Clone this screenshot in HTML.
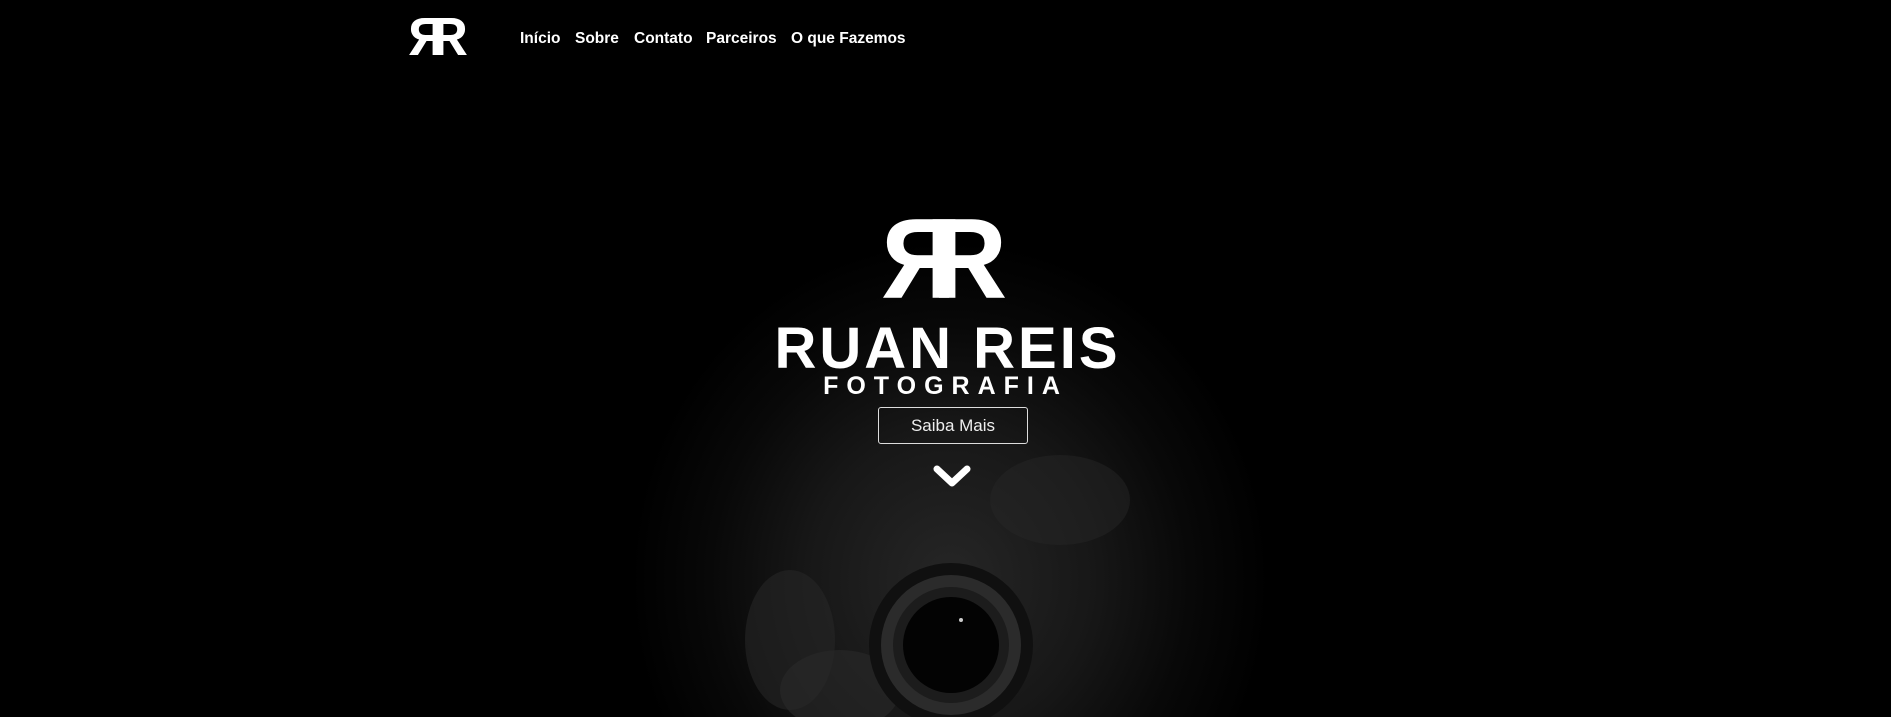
<!DOCTYPE html>
<html><head><meta charset="utf-8"><style>
html,body{margin:0;padding:0;background:#000;width:1891px;height:717px;overflow:hidden;font-family:"Liberation Sans",sans-serif;color:#fff}
.bg{position:absolute;left:0;top:0;width:1891px;height:717px;background:radial-gradient(ellipse 320px 340px at 950px 580px,#262626 0%,#171717 45%,#080808 75%,#000 100%)}
.nav{position:absolute;top:30px;left:520px;font-weight:bold;font-size:15.5px}
.nav span{position:absolute;white-space:nowrap}
.title{position:absolute;left:0;width:1891px;text-align:center;font-weight:bold}
.btn{position:absolute;left:878px;top:407px;width:148px;height:35px;border:1px solid #ddd;border-radius:3px;text-align:center;line-height:35px;font-size:17px;color:#eee}
</style></head><body>
<div class="bg"></div>
<svg style="position:absolute;left:0;top:0" width="1891" height="717">
 <ellipse cx="790" cy="640" rx="45" ry="70" fill="#262626" opacity="0.6"/>
 <ellipse cx="840" cy="690" rx="60" ry="40" fill="#2a2a2a" opacity="0.6"/>
 <ellipse cx="1060" cy="500" rx="70" ry="45" fill="#262626" opacity="0.5"/>
 <circle cx="951" cy="645" r="82" fill="#101010"/>
 <circle cx="951" cy="645" r="70" fill="#2b2b2b"/>
 <circle cx="951" cy="645" r="58" fill="#1c1c1c"/>
 <circle cx="951" cy="645" r="48" fill="#030303"/>
 <circle cx="961" cy="620" r="2" fill="#ccc"/>
 <g transform="translate(413,15)">
  <text x="0" y="40" font-family="Liberation Sans" font-weight="bold" font-size="54" fill="#fff" transform="translate(34,0) scale(-1,1)">R</text>
  <text x="16" y="40" font-family="Liberation Sans" font-weight="bold" font-size="54" fill="#fff">R</text>
 </g>
 <g transform="translate(887,215)">
  <text x="0" y="83" font-family="Liberation Sans" font-weight="bold" font-size="114" fill="#fff" transform="translate(76,0) scale(-1,1)">R</text>
  <text x="38" y="83" font-family="Liberation Sans" font-weight="bold" font-size="114" fill="#fff">R</text>
 </g>
 <polyline points="937,469 952,483 967,469" fill="none" stroke="#fff" stroke-width="7" stroke-linecap="round" stroke-linejoin="round"/>
</svg>
<div class="nav">
 <span style="left:0">Início</span>
 <span style="left:55px">Sobre</span>
 <span style="left:114px">Contato</span>
 <span style="left:186px">Parceiros</span>
 <span style="left:271px">O que Fazemos</span>
</div>
<div class="title" style="top:315px;font-size:58px;letter-spacing:3px;padding-left:2px">RUAN REIS</div>
<div class="title" style="top:372px;font-size:25px;letter-spacing:8px;padding-left:0">FOTOGRAFIA</div>
<div class="btn">Saiba Mais</div>
</body></html>
